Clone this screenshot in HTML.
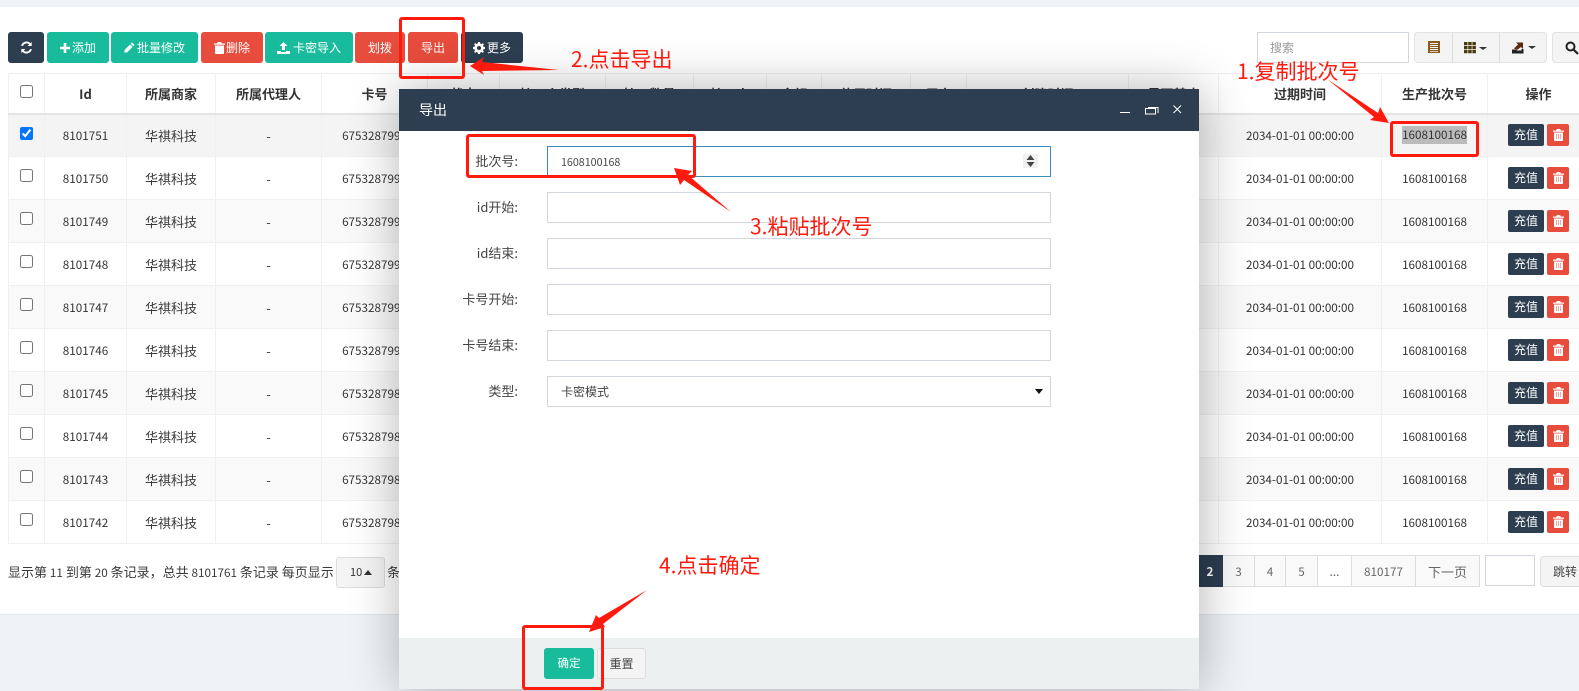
<!DOCTYPE html>
<html lang="zh"><head><meta charset="utf-8"><title>导出</title>
<style>
*{box-sizing:border-box}
html,body{margin:0;padding:0}
body{width:1579px;height:691px;overflow:hidden;position:relative;background:#eff3f6;font-family:"Noto Sans CJK SC","Liberation Sans",sans-serif;font-size:13px;color:#333}
.abs{position:absolute}
#panel{position:absolute;left:0;top:7px;width:1579px;height:608px;background:#fff;border-bottom:1px solid #e3e7ea}
.b{position:absolute;top:32px;height:31px;border-radius:3px;color:#fff;font-size:12px;display:flex;align-items:center;justify-content:center;gap:2px;white-space:nowrap}
.dark{background:#2c3e50}.green{background:#18bc9c}.red{background:#e74c3c}
.b svg{display:block;fill:#fff}
table{position:absolute;left:8px;top:73px;width:1581px;border-collapse:collapse;table-layout:fixed;background:#fff}
th,td{border:1px solid #f0f0f0;text-align:center;padding:0;overflow:hidden;white-space:nowrap}
th{height:40px;padding-top:1px;border-bottom:2px solid #e4e4e4;font-weight:bold;font-size:13px;color:#333}
td{height:43px;font-size:13px;color:#3a3a3a}
td.n{font-size:11.7px;color:#333}
tr.o td{background:#f9f9f9}
tr.h td{background:#f4f4f4}
input[type=checkbox]{margin:0;width:13px;height:13px;position:relative;top:-4px;display:inline-block;vertical-align:middle}
.op{position:relative;display:block;height:22px}
.cz{position:absolute;left:20px;top:0;width:36px;height:22px;background:#2c3e50;color:#fff;border-radius:2px;font-size:12px;line-height:22px;text-align:center}
.tr{position:absolute;left:59px;top:0;width:22px;height:22px;background:#e74c3c;border-radius:2px;display:flex;align-items:center;justify-content:center}
.sel{background:#bbb;display:inline-block;line-height:18px}
#grp{position:absolute;left:1414px;top:32px;width:133px;height:31px;background:#f4f4f4;border:1px solid #e2e2e2;border-radius:4px}
#grp i{position:absolute;top:0;width:1px;height:29px;background:#ddd}
#srch{position:absolute;left:1552px;top:32px;width:40px;height:31px;background:#f4f4f4;border:1px solid #e2e2e2;border-radius:4px}
.input{position:absolute;background:#fff;border:1px solid #d2d6de}
.pg{position:absolute;top:555px;height:32px;background:#f9f9f9;border:1px solid #ddd;border-left:0;color:#666;font-size:11.7px;display:flex;align-items:center;justify-content:center}
#dlg{position:absolute;left:399px;top:89px;width:800px;height:600px;background:#fff;box-shadow:1px 1px 50px rgba(0,0,0,.3);border-radius:2px 2px 0 0}
#dh{position:absolute;left:0;top:0;width:800px;height:42px;background:#2c3e50;color:#fff;font-size:14px;line-height:42px;padding-left:20px}
#df{position:absolute;left:0;top:549px;width:800px;height:51px;background:#ecf0f1}
.lbl{position:absolute;left:0;width:119px;text-align:right;font-size:13px;color:#444;line-height:30px}
.f{position:absolute;left:148px;width:504px;height:31px;background:#fff;border:1px solid #d2d6de}
.rb{position:absolute;border:3px solid #ff1a0e;border-radius:3px}
.an{position:absolute;color:#ff1a0e;font-size:21px;line-height:26px;white-space:nowrap}
</style></head><body>
<div class="abs" style="left:0;top:0;width:1579px;height:7px;background:#f0f3f6"></div>
<div id="panel"></div>

<div class="b dark" style="left:8px;width:36px"><svg width="13" height="13" viewBox="0 0 14 14"><path d="M12.6 1v4.4H8.2l1.7-1.7A4 4 0 0 0 3.300 5.200H1.200A6 6 0 0 1 11.300 2.300zM1.400 13V8.600h4.400L4.100 10.300a4 4 0 0 0 6.600-1.500h2.100A6 6 0 0 1 2.700 11.700z"/></svg></div>
<div class="b green" style="left:47px;width:62px"><svg width="10" height="10" viewBox="0 0 10 10"><path d="M3.700 0h2.600v3.700H10v2.600H6.300V10H3.700V6.300H0V3.700h3.700z"/></svg>添加</div>
<div class="b green" style="left:111px;width:87px"><svg width="11" height="11" viewBox="0 0 11 11"><path d="M8 .5l2.500 2.500-1.300 1.300-2.500-2.500zM6 2.500L8.500 5 3 10.500H.5V8z"/></svg>批量修改</div>
<div class="b red" style="left:201px;width:62px;gap:1px"><svg width="11" height="12" viewBox="0 0 11 12"><path d="M4 0h3l1 1.500h3v1.200H0V1.500h3zM1 3.500h9V11a1 1 0 0 1-1 1H2a1 1 0 0 1-1-1z"/></svg>删除</div>
<div class="b green" style="left:265px;width:88px;gap:3px"><svg width="13" height="12" viewBox="0 0 13 12"><path d="M6.500 0L10.500 4H8v4H5V4H2.500zM0 9h4v1h5V9h4v3H0z"/></svg>卡密导入</div>
<div class="b red" style="left:355px;width:50px">划拨</div>
<div class="b red" style="left:408px;width:50px">导出</div>
<div class="b dark" style="left:461px;width:62px"><svg width="12" height="12" viewBox="0 0 12 12"><path fill-rule="evenodd" d="M5 0h2l.3 1.600 1.100.5L9.800 1.200l1.100 1.100-.9 1.400.5 1.100L12 5v2l-1.500.3-.5 1.100.9 1.400-1.100 1.100-1.400-.9-1.100.5L7 12H5l-.3-1.500-1.100-.5-1.400.9-1.100-1.100.9-1.400-.5-1.100L0 7V5l1.500-.3.5-1.100-.9-1.400 1.100-1.100 1.400.9 1.100-.5zM6 4a2 2 0 1 0 0 4 2 2 0 0 0 0-4z"/></svg>更多</div>

<div class="input" style="left:1257px;top:32px;width:152px;height:31px;color:#999;font-size:12px;line-height:29px;padding-left:12px">搜索</div>
<div id="grp"><i style="left:37px"></i><i style="left:84px"></i>
<svg class="abs" style="left:13px;top:8px" width="12" height="12" viewBox="0 0 12 12"><path fill="#8a5a1e" d="M0 0h12v12H0z"/><path fill="#f4f4f4" d="M2 2h8v1H2zM2 4h8v1H2zM2 6h8v1H2zM2 8h8v1H2zM2 10h8v.8H2z"/></svg>
<svg class="abs" style="left:49px;top:9px" width="23" height="12" viewBox="0 0 23 12"><path fill="#4a3a10" d="M0 0h3.500v3.200H0zM4.200 0h3.500v3.200H4.200zM8.400 0h3.500v3.200H8.400zM0 4h3.500v3.200H0zM4.200 4h3.500v3.200H4.200zM8.400 4h3.500v3.200H8.400zM0 8h3.500v3.200H0zM4.200 8h3.500v3.200H4.200zM8.400 8h3.500v3.200H8.400z"/><path fill="#333" d="M15 5h8l-4 3z"/></svg>
<svg class="abs" style="left:97px;top:8px" width="25" height="13" viewBox="0 0 25 13"><path fill="#222" d="M0 8.500h3.500l1.500 1h4.500V8h2v4.500H0z"/><path fill="#5a2a12" d="M2 7.500l4-4-2-2h7V8L9 6 5 9z"/><path fill="#333" d="M16 5h8l-4 3z"/></svg>
</div>
<div id="srch"><svg class="abs" style="left:12px;top:8px" width="14" height="14" viewBox="0 0 14 14"><circle cx="5.500" cy="5.500" r="4" fill="none" stroke="#222" stroke-width="2"/><path d="M8.500 8.500L13 13" stroke="#222" stroke-width="2.200"/></svg></div>

<table>
<colgroup><col style="width:36px"><col style="width:82px"><col style="width:89px"><col style="width:106px"><col style="width:106px"><col style="width:72px"><col style="width:106px"><col style="width:88px"><col style="width:73px"><col style="width:55px"><col style="width:89px"><col style="width:56px"><col style="width:162px"><col style="width:90px"><col style="width:163px"><col style="width:106px"><col style="width:102px"></colgroup>
<tr><th><input type="checkbox"></th><th>Id</th><th>所属商家</th><th>所属代理人</th><th>卡号</th><th>状态</th><th>接口人类型</th><th>接口数量</th><th>接口人</th><th>金额</th><th>使用时间</th><th>用户</th><th>创建时间</th><th>是否禁止</th><th>过期时间</th><th>生产批次号</th><th>操作</th></tr>
<tr class="h"><td><input type="checkbox" checked></td><td class="n">8101751</td><td>华祺科技</td><td>-</td><td class="n">6753287995</td><td></td><td></td><td></td><td></td><td></td><td></td><td></td><td></td><td></td><td class="n">2034-01-01 00:00:00</td><td class="n"><span class="sel">1608100168</span></td><td><span class="op"><span class="cz">充值</span><span class="tr"><svg width="11" height="12" viewBox="0 0 11 12"><path fill="#fff" d="M4 0h3l1 1.500h3v1.200H0V1.500h3zM1 3.500h9V11a1 1 0 0 1-1 1H2a1 1 0 0 1-1-1z"/><path fill="#f2a59c" d="M3 5h1v5H3zM5 5h1v5H5zM7 5h1v5H7z"/></svg></span></span></td></tr>
<tr><td><input type="checkbox"></td><td class="n">8101750</td><td>华祺科技</td><td>-</td><td class="n">6753287994</td><td></td><td></td><td></td><td></td><td></td><td></td><td></td><td></td><td></td><td class="n">2034-01-01 00:00:00</td><td class="n">1608100168</td><td><span class="op"><span class="cz">充值</span><span class="tr"><svg width="11" height="12" viewBox="0 0 11 12"><path fill="#fff" d="M4 0h3l1 1.500h3v1.200H0V1.500h3zM1 3.500h9V11a1 1 0 0 1-1 1H2a1 1 0 0 1-1-1z"/><path fill="#f2a59c" d="M3 5h1v5H3zM5 5h1v5H5zM7 5h1v5H7z"/></svg></span></span></td></tr>
<tr class="o"><td><input type="checkbox"></td><td class="n">8101749</td><td>华祺科技</td><td>-</td><td class="n">6753287993</td><td></td><td></td><td></td><td></td><td></td><td></td><td></td><td></td><td></td><td class="n">2034-01-01 00:00:00</td><td class="n">1608100168</td><td><span class="op"><span class="cz">充值</span><span class="tr"><svg width="11" height="12" viewBox="0 0 11 12"><path fill="#fff" d="M4 0h3l1 1.500h3v1.200H0V1.500h3zM1 3.500h9V11a1 1 0 0 1-1 1H2a1 1 0 0 1-1-1z"/><path fill="#f2a59c" d="M3 5h1v5H3zM5 5h1v5H5zM7 5h1v5H7z"/></svg></span></span></td></tr>
<tr><td><input type="checkbox"></td><td class="n">8101748</td><td>华祺科技</td><td>-</td><td class="n">6753287992</td><td></td><td></td><td></td><td></td><td></td><td></td><td></td><td></td><td></td><td class="n">2034-01-01 00:00:00</td><td class="n">1608100168</td><td><span class="op"><span class="cz">充值</span><span class="tr"><svg width="11" height="12" viewBox="0 0 11 12"><path fill="#fff" d="M4 0h3l1 1.500h3v1.200H0V1.500h3zM1 3.500h9V11a1 1 0 0 1-1 1H2a1 1 0 0 1-1-1z"/><path fill="#f2a59c" d="M3 5h1v5H3zM5 5h1v5H5zM7 5h1v5H7z"/></svg></span></span></td></tr>
<tr class="o"><td><input type="checkbox"></td><td class="n">8101747</td><td>华祺科技</td><td>-</td><td class="n">6753287991</td><td></td><td></td><td></td><td></td><td></td><td></td><td></td><td></td><td></td><td class="n">2034-01-01 00:00:00</td><td class="n">1608100168</td><td><span class="op"><span class="cz">充值</span><span class="tr"><svg width="11" height="12" viewBox="0 0 11 12"><path fill="#fff" d="M4 0h3l1 1.500h3v1.200H0V1.500h3zM1 3.500h9V11a1 1 0 0 1-1 1H2a1 1 0 0 1-1-1z"/><path fill="#f2a59c" d="M3 5h1v5H3zM5 5h1v5H5zM7 5h1v5H7z"/></svg></span></span></td></tr>
<tr><td><input type="checkbox"></td><td class="n">8101746</td><td>华祺科技</td><td>-</td><td class="n">6753287990</td><td></td><td></td><td></td><td></td><td></td><td></td><td></td><td></td><td></td><td class="n">2034-01-01 00:00:00</td><td class="n">1608100168</td><td><span class="op"><span class="cz">充值</span><span class="tr"><svg width="11" height="12" viewBox="0 0 11 12"><path fill="#fff" d="M4 0h3l1 1.500h3v1.200H0V1.500h3zM1 3.500h9V11a1 1 0 0 1-1 1H2a1 1 0 0 1-1-1z"/><path fill="#f2a59c" d="M3 5h1v5H3zM5 5h1v5H5zM7 5h1v5H7z"/></svg></span></span></td></tr>
<tr class="o"><td><input type="checkbox"></td><td class="n">8101745</td><td>华祺科技</td><td>-</td><td class="n">6753287989</td><td></td><td></td><td></td><td></td><td></td><td></td><td></td><td></td><td></td><td class="n">2034-01-01 00:00:00</td><td class="n">1608100168</td><td><span class="op"><span class="cz">充值</span><span class="tr"><svg width="11" height="12" viewBox="0 0 11 12"><path fill="#fff" d="M4 0h3l1 1.500h3v1.200H0V1.500h3zM1 3.500h9V11a1 1 0 0 1-1 1H2a1 1 0 0 1-1-1z"/><path fill="#f2a59c" d="M3 5h1v5H3zM5 5h1v5H5zM7 5h1v5H7z"/></svg></span></span></td></tr>
<tr><td><input type="checkbox"></td><td class="n">8101744</td><td>华祺科技</td><td>-</td><td class="n">6753287988</td><td></td><td></td><td></td><td></td><td></td><td></td><td></td><td></td><td></td><td class="n">2034-01-01 00:00:00</td><td class="n">1608100168</td><td><span class="op"><span class="cz">充值</span><span class="tr"><svg width="11" height="12" viewBox="0 0 11 12"><path fill="#fff" d="M4 0h3l1 1.500h3v1.200H0V1.500h3zM1 3.500h9V11a1 1 0 0 1-1 1H2a1 1 0 0 1-1-1z"/><path fill="#f2a59c" d="M3 5h1v5H3zM5 5h1v5H5zM7 5h1v5H7z"/></svg></span></span></td></tr>
<tr class="o"><td><input type="checkbox"></td><td class="n">8101743</td><td>华祺科技</td><td>-</td><td class="n">6753287987</td><td></td><td></td><td></td><td></td><td></td><td></td><td></td><td></td><td></td><td class="n">2034-01-01 00:00:00</td><td class="n">1608100168</td><td><span class="op"><span class="cz">充值</span><span class="tr"><svg width="11" height="12" viewBox="0 0 11 12"><path fill="#fff" d="M4 0h3l1 1.500h3v1.200H0V1.500h3zM1 3.500h9V11a1 1 0 0 1-1 1H2a1 1 0 0 1-1-1z"/><path fill="#f2a59c" d="M3 5h1v5H3zM5 5h1v5H5zM7 5h1v5H7z"/></svg></span></span></td></tr>
<tr><td><input type="checkbox"></td><td class="n">8101742</td><td>华祺科技</td><td>-</td><td class="n">6753287986</td><td></td><td></td><td></td><td></td><td></td><td></td><td></td><td></td><td></td><td class="n">2034-01-01 00:00:00</td><td class="n">1608100168</td><td><span class="op"><span class="cz">充值</span><span class="tr"><svg width="11" height="12" viewBox="0 0 11 12"><path fill="#fff" d="M4 0h3l1 1.500h3v1.200H0V1.500h3zM1 3.500h9V11a1 1 0 0 1-1 1H2a1 1 0 0 1-1-1z"/><path fill="#f2a59c" d="M3 5h1v5H3zM5 5h1v5H5zM7 5h1v5H7z"/></svg></span></span></td></tr>
</table>

<div class="abs" style="left:8px;top:562px;font-size:13px;line-height:20px;color:#3a3a3a;white-space:nowrap">显示第 <span style="font-size:11.700px">11</span> 到第 <span style="font-size:11.700px">20</span> 条记录，总共 <span style="font-size:11.700px">8101761</span> 条记录 每页显示</div>
<div class="abs" style="left:336px;top:557px;width:49px;height:31px;background:#f4f4f4;border:1px solid #ddd;border-radius:3px;font-size:11px;line-height:29px;padding-left:13px;color:#333">10</div>
<svg class="abs" style="left:364px;top:570px" width="8" height="5" viewBox="0 0 8 5"><path fill="#333" d="M4 0l4 5H0z"/></svg>
<div class="abs" style="left:387px;top:562px;font-size:13px;line-height:20px;color:#3a3a3a;white-space:nowrap">条记录</div>

<div class="pg" style="left:1180px;width:43px;background:#2c3e50;border-color:#2c3e50;color:#fff;font-weight:bold;padding-left:18px">2</div>
<div class="pg" style="left:1223px;width:32px">3</div>
<div class="pg" style="left:1255px;width:31px">4</div>
<div class="pg" style="left:1286px;width:32px">5</div>
<div class="pg" style="left:1318px;width:34px;background:#fff">...</div>
<div class="pg" style="left:1352px;width:64px">810177</div>
<div class="pg" style="left:1416px;width:64px;font-size:13px">下一页</div>
<div class="input" style="left:1485px;top:555px;width:50px;height:31px"></div>
<div class="abs" style="left:1540px;top:556px;width:60px;height:31px;background:#f4f4f4;border:1px solid #ddd;border-radius:4px;font-size:12px;line-height:29px;padding-left:12px;color:#444">跳转</div>

<div id="dlg">
<div id="dh">导出
<svg class="abs" style="left:721px;top:16px" width="62" height="10" viewBox="0 0 62 10"><path d="M0 7.500h10" stroke="#fff" stroke-width="1"/><path d="M28 2.500h10v5.500M25.500 3.500h10v5.500h-10z" fill="none" stroke="#fff"/><path d="M53.500 .5l7.500 7.500M61 .5l-7.500 7.500" stroke="#fff" stroke-width="1"/></svg>
</div>
<div class="lbl" style="top:57px">批次号:</div>
<div class="f" style="top:57px;border-color:#3c8dbc;font-size:10.700px;line-height:32px;padding-left:13px;color:#444">1608100168</div>
<div class="abs" style="left:624px;top:65px;width:15px;height:14px;background:#f0f0f0"></div>
<svg class="abs" style="left:627px;top:65px" width="9" height="14" viewBox="0 0 9 14"><path fill="#444" d="M4.500 1L8.500 6H.5zM4.500 13L.5 8h8z"/></svg>
<div class="lbl" style="top:103px">id开始:</div><div class="f" style="top:103px"></div>
<div class="lbl" style="top:149px">id结束:</div><div class="f" style="top:149px"></div>
<div class="lbl" style="top:195px">卡号开始:</div><div class="f" style="top:195px"></div>
<div class="lbl" style="top:241px">卡号结束:</div><div class="f" style="top:241px"></div>
<div class="lbl" style="top:287px">类型:</div>
<div class="f" style="top:287px;font-size:12px;line-height:29px;padding-left:13px;color:#444">卡密模式</div>
<svg class="abs" style="left:636px;top:300px" width="8" height="5" viewBox="0 0 8 5"><path fill="#111" d="M0 0h8L4 5z"/></svg>
<div id="df">
<div class="abs" style="left:145px;top:10px;width:50px;height:31px;background:#18bc9c;border-radius:3px;color:#fff;font-size:11.500px;line-height:31px;text-align:center">确定</div>
<div class="abs" style="left:198px;top:10px;width:49px;height:31px;background:#f4f4f4;border:1px solid #ddd;border-radius:3px;color:#444;font-size:12px;line-height:29px;text-align:center">重置</div>
</div>
</div>

<div class="rb" style="left:399px;top:17px;width:66px;height:62px"></div>
<div class="rb" style="left:1390px;top:121px;width:89px;height:36px"></div>
<div class="rb" style="left:466px;top:134px;width:230px;height:44px"></div>
<div class="rb" style="left:522px;top:625px;width:82px;height:65px"></div>
<svg class="abs" style="left:0;top:0;pointer-events:none" width="1579" height="691" viewBox="0 0 1579 691">
<path fill="#ff1a0e" d="M470 66L484 57 482 62 559 70 482 71 484 75z"/>
<path fill="#ff1a0e" d="M1327 79L1378 113 1380 107 1389 123 1370 120 1374 117z"/>
<path fill="#ff1a0e" d="M731 212L688 175 692 171 674 168 680 185 684 180z"/>
<path fill="#ff1a0e" d="M647 590L599 618 596 615 589 632 605 627 603 624z"/>
</svg>
<div class="an" style="left:571px;top:46px">2.点击导出</div>
<div class="an" style="left:1237px;top:58px">1.复制批次号</div>
<div class="an" style="left:750px;top:213px">3.粘贴批次号</div>
<div class="an" style="left:659px;top:552px">4.点击确定</div>
</body></html>
